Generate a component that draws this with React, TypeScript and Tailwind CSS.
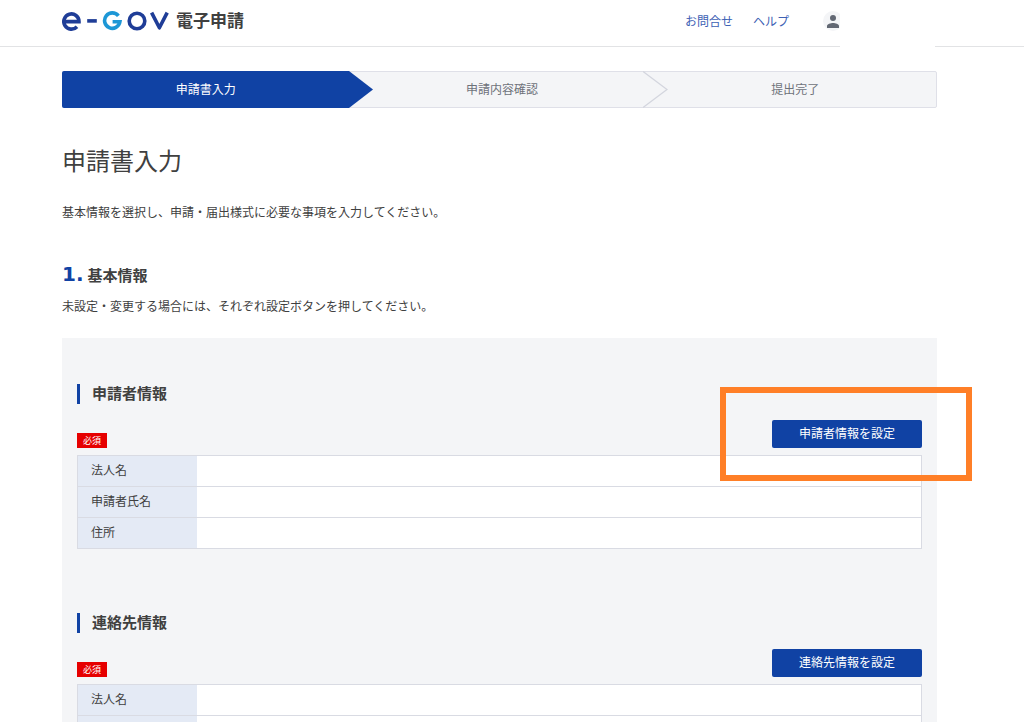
const STEPS = ["申請書入力", "申請内容確認", "提出完了"];

function Logo() {
  return (
    <svg width="108" height="20" viewBox="0 0 108 20" fill="none" strokeWidth="3.6" role="img" aria-label="e-Gov">
      <path d="M2.2 10.6H17A7.6 7.6 0 1 0 15 15.7" stroke="#1f3d97" />
      <path d="M25.2 9.9H34.8" stroke="#1f3d97" strokeWidth="3.6" />
      <path d="M56.4 4.9A7.7 7.7 0 1 0 57.9 10.8H50.6" stroke="#1d97d6" />
      <circle cx="75" cy="10" r="7.8" stroke="#1f3d97" />
      <path d="M89.6 1.6L97.4 16.8L105.2 1.6" stroke="#1f3d97" strokeLinejoin="round" />
    </svg>
  );
}

function Header() {
  return (
    <header className="relative flex h-[47px] items-center border-b border-[#e2e3e5] pr-[181px] pb-1 pl-[62px]">
      <a href="#" className="flex items-center gap-1.5">
        <Logo />
        <span className="pb-0.5 text-[17px] leading-6 font-bold">電子申請</span>
      </a>
      <nav className="ml-auto flex items-center gap-5 text-[#3d61b4]">
        <a href="#">お問合せ</a>
        <a href="#">ヘルプ</a>
      </nav>
      <button
        type="button"
        aria-label="アカウント"
        className="ml-[34px] flex size-5 items-center justify-center rounded-full bg-[#f4f5f7]"
      >
        <svg width="12" height="13" viewBox="0 0 12 13" fill="#626873">
          <circle cx="6" cy="3" r="3" />
          <path d="M0 13V10.9C0 8.8 3.6 7.9 6 7.9S12 8.8 12 10.9V13Z" />
        </svg>
      </button>
      <div className="absolute top-0 right-[89px] h-[49px] w-[95px] bg-white" />
    </header>
  );
}

function Stepper() {
  return (
    <ol className="grid h-[37px] grid-cols-[287fr_294fr_294fr] rounded-xs border border-[#dfe0e8] bg-[#f4f5f7] text-[#6e727a]">
      {STEPS.map((step, i) => (
        <li
          key={step}
          aria-current={i === 0 ? "step" : undefined}
          className={
            i === 0
              ? "relative -my-px -ml-px flex items-center justify-center rounded-l-xs bg-[#1042a4] pb-0.5 text-white"
              : "relative flex items-center justify-center pb-0.5 pl-3"
          }
        >
          <span>{step}</span>
          {i === 0 && (
            <svg className="absolute top-0 left-full" width="24" height="37" viewBox="0 0 24 37" fill="#1042a4">
              <path d="M0 0L24 18.5L0 37Z" />
            </svg>
          )}
          {i === 1 && (
            <svg className="absolute -top-px left-full" width="25" height="37" viewBox="0 0 25 37" fill="none" stroke="#d3d5de" strokeWidth="1.3">
              <path d="M0 0.5L24 18.5L0 36.5" />
            </svg>
          )}
        </li>
      ))}
    </ol>
  );
}

type InfoProps = { title: string; action: string; rows: string[]; highlighted?: boolean };

function InfoSection({ title, action, rows, highlighted }: InfoProps) {
  return (
    <section>
      <h3 className="border-l-3 border-[#1042a4] pb-0.5 pl-3 text-[15px] leading-[18px] font-bold">{title}</h3>
      <div className="mt-4 flex h-7 items-end justify-between">
        <span className="flex h-[15px] w-[30px] items-center justify-center bg-[#e60000] text-[9px] leading-3 text-white">
          必須
        </span>
        <div className="relative self-start">
          <button type="button" className="h-7 w-[150px] rounded-xs bg-[#1042a4] pb-0.5 text-white">
            {action}
          </button>
          {highlighted && (
            <div className="pointer-events-none absolute -top-[33px] -right-[50px] h-[94px] w-[252px] border-6 border-[#ff7f27]" />
          )}
        </div>
      </div>
      <table aria-label={title} className="mt-[7px] w-full border-collapse border border-[#d9dbe3] bg-white">
        <tbody>
          {rows.map((row, i) => (
            <tr key={i} className="h-[31px] border-b border-[#d9dbe3]">
              <th scope="row" className="w-[119px] bg-[#e4eaf5] pb-0.5 pl-[13px] text-left font-normal">
                {row}
              </th>
              <td />
            </tr>
          ))}
        </tbody>
      </table>
    </section>
  );
}

export default function App() {
  return (
    <div className="h-screen overflow-hidden bg-white font-['Noto_Sans_CJK_JP',sans-serif] text-xs leading-5 text-[#404040]">
      <Header />
      <main className="pt-6 pr-[87px] pl-[62px]">
        <Stepper />
        <h1 className="mt-9 text-2xl leading-8">申請書入力</h1>
        <p className="mt-[26px]">基本情報を選択し、申請・届出様式に必要な事項を入力してください。</p>
        <h2 className="mt-10 flex h-6 items-baseline gap-1 text-[15px] leading-6 font-bold">
          <span className="font-['DejaVu_Sans',sans-serif] text-xl leading-6 text-[#1042a4]">1.</span>
          基本情報
        </h2>
        <p className="mt-2.5">未設定・変更する場合には、それぞれ設定ボタンを押してください。</p>
        <div className="mt-[22px] flex flex-col gap-16 bg-[#f4f5f7] px-[15px] pt-[46px] pb-12">
          <InfoSection
            title="申請者情報"
            action="申請者情報を設定"
            rows={["法人名", "申請者氏名", "住所"]}
            highlighted
          />
          <InfoSection title="連絡先情報" action="連絡先情報を設定" rows={["法人名", ""]} />
        </div>
      </main>
    </div>
  );
}
